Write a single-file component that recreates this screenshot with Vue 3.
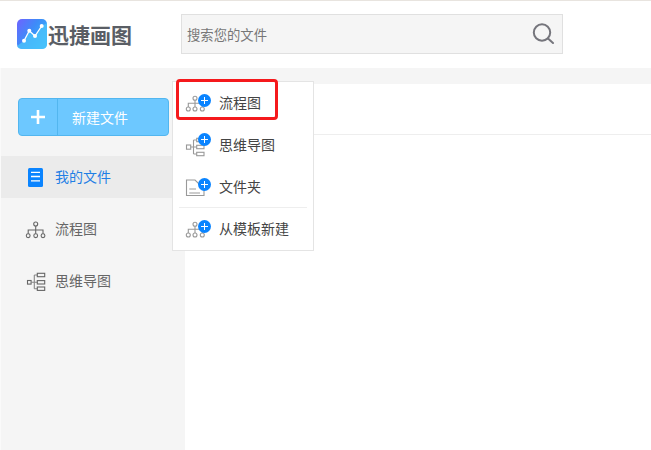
<template>
  <div class="page">
    <header class="topbar">
      <div class="logo">
        <svg class="logo-mark" width="30" height="30" viewBox="0 0 30 30">
          <defs>
            <linearGradient id="logoBg" x1="0" y1="0" x2="1" y2="0.7">
              <stop offset="0" stop-color="#6f62ff" />
              <stop offset="0.5" stop-color="#3d8cf8" />
              <stop offset="1" stop-color="#38b6fb" />
            </linearGradient>
          </defs>
          <rect width="30" height="30" rx="5" fill="url(#logoBg)" />
          <path d="M0 27 L7 21.7 L12.3 11.7 L18 17 L24.7 7 L30 4 V25 Q30 30 25 30 H5 Q1 30 0 27 Z" fill="#4cc4fb" opacity="0.75" />
          <path d="M7 21.7 L12.3 11.7 L18 17 L24.7 7" fill="none" stroke="#fff" stroke-width="1.3" />
          <circle cx="7" cy="21.7" r="2" fill="#fff" />
          <circle cx="12.3" cy="11.7" r="2" fill="#fff" />
          <circle cx="18" cy="17" r="2" fill="#fff" />
          <circle cx="24.7" cy="7" r="2" fill="#fff" />
        </svg>
        <span class="logo-text">迅捷画图</span>
      </div>
      <div class="search">
        <span class="search-hint">搜索您的文件</span>
        <svg width="24" height="24" viewBox="0 0 24 24" fill="none" stroke="#75757c" stroke-width="2">
          <circle cx="11" cy="10.5" r="8.2" />
          <path d="M17 16.5 L22 21" stroke-linecap="round" />
        </svg>
      </div>
    </header>

    <div class="body">
      <aside class="sidebar">
        <button class="new-btn">
          <span class="new-plus">
            <svg width="16" height="16" viewBox="0 0 16 16"><path d="M8 1V15M1 8H15" stroke="#fff" stroke-width="2.6" /></svg>
          </span>
          <span class="new-label">新建文件</span>
        </button>
        <nav class="nav">
          <a class="nav-item active">
            <svg width="20" height="20" viewBox="0 0 20 20">
              <rect x="2" y="1" width="15" height="19" rx="1.5" fill="#0a84ff" />
              <path d="M5 5.3H14M5 9.5H14M5 13.8H14" stroke="#fff" stroke-width="1.3" />
            </svg>
            <span class="label">我的文件</span>
          </a>
          <a class="nav-item">
            <svg width="20" height="18" viewBox="0 0 20 18" fill="none" stroke="#666" stroke-width="1.1">
              <circle cx="9.7" cy="4" r="2" />
              <path d="M9.7 6V13.7M2.2 13.7V10H17V13.7" />
              <circle cx="2.2" cy="15.7" r="1.9" />
              <circle cx="9.7" cy="15.7" r="1.9" />
              <circle cx="17" cy="15.7" r="1.9" />
            </svg>
            <span class="label">流程图</span>
          </a>
          <a class="nav-item">
            <svg width="20" height="18" viewBox="0 0 20 18" fill="none" stroke="#666" stroke-width="1.1">
              <rect x="1.5" y="8.5" width="3.6" height="3.6" />
              <path d="M5 10.3H8.3M8.3 3V16.7M8.3 3H11.3M8.3 10.3H11.3M8.3 16.7H11.3" stroke="#888" />
              <rect x="11.3" y="1.3" width="7.4" height="3.4" />
              <rect x="11.3" y="8.6" width="7.4" height="3.4" />
              <rect x="11.3" y="15" width="7.4" height="3.4" />
            </svg>
            <span class="label">思维导图</span>
          </a>
        </nav>
      </aside>
      <main class="main">
        <div class="main-head"></div>
      </main>
    </div>

    <div class="menu">
      <div class="menu-item">
        <span class="menu-icon">
          <svg width="26" height="22" viewBox="0 0 26 22" fill="none" stroke="#999" stroke-width="1.1">
            <circle cx="9" cy="7.3" r="2" />
            <path d="M9 9.3V16M2.3 16V12.3H16.3V16" />
            <circle cx="2.3" cy="18" r="2" />
            <circle cx="9" cy="18" r="2" />
            <circle cx="16.3" cy="18" r="2" />
          </svg>
          <i class="plus"></i>
        </span>
        <span class="label">流程图</span>
      </div>
      <div class="menu-item">
        <span class="menu-icon">
          <svg width="26" height="22" viewBox="0 0 26 22" fill="none" stroke="#999" stroke-width="1.1">
            <rect x="0.5" y="12" width="4.2" height="4.2" />
            <path d="M4.7 14H7.5M7.5 7V21M7.5 7H10.7M7.5 14H10.7M7.5 21H10.7" />
            <rect x="10.7" y="5.3" width="7.3" height="3.4" />
            <rect x="10.7" y="12.3" width="7.3" height="3.4" />
            <rect x="10.7" y="19.3" width="7.3" height="3.4" />
          </svg>
          <i class="plus high"></i>
        </span>
        <span class="label">思维导图</span>
      </div>
      <div class="menu-item">
        <span class="menu-icon">
          <svg width="26" height="22" viewBox="0 0 26 22" fill="none" stroke="#999" stroke-width="1.1">
            <path d="M0.5 20.5V5H9L13 9H18V20.5Z" />
            <path d="M3.3 14H10M3.3 18H14" />
          </svg>
          <i class="plus"></i>
        </span>
        <span class="label">文件夹</span>
      </div>
      <div class="menu-line"></div>
      <div class="menu-item">
        <span class="menu-icon">
          <svg width="26" height="22" viewBox="0 0 26 22" fill="none" stroke="#999" stroke-width="1.1">
            <circle cx="9" cy="7.3" r="2" />
            <path d="M9 9.3V16M2.3 16V12.3H16.3V16" />
            <circle cx="2.3" cy="18" r="2" />
            <circle cx="9" cy="18" r="2" />
            <circle cx="16.3" cy="18" r="2" />
          </svg>
          <i class="plus"></i>
        </span>
        <span class="label">从模板新建</span>
      </div>
      <div class="highlight"></div>
    </div>
  </div>
</template>

<script setup>
</script>

<style>
html,
body {
  margin: 0;
  background: #fff;
}
</style>

<style scoped>
.page {
  position: relative;
  width: 651px;
  height: 450px;
  overflow: hidden;
  display: flex;
  flex-direction: column;
  font-family: "Liberation Sans", "Noto Sans CJK SC", sans-serif;
  border-top: 1px solid #e8e4df;
  box-sizing: border-box;
}

.label {
  margin-bottom: 2px;
}

.topbar {
  height: 67px;
  flex: none;
  display: flex;
  align-items: center;
  padding: 0 0 0 17px;
  background: #fff;
  box-sizing: border-box;
}

.logo {
  display: flex;
  align-items: center;
  width: 164px;
  flex: none;
  margin-top: -1px;
}

.logo-mark {
  flex: none;
}

.logo-text {
  margin-left: 1px;
  font-size: 21px;
  font-weight: 700;
  color: #5a5e65;
  white-space: nowrap;
}

.search {
  width: 382px;
  height: 40px;
  box-sizing: border-box;
  display: flex;
  align-items: center;
  justify-content: space-between;
  padding: 0 7px 0 5px;
  background: #f5f5f5;
  border: 1px solid #e0e0e0;
  margin-top: -1px;
}

.search-hint {
  font-size: 13.33px;
  color: #777;
}

.body {
  flex: 1;
  display: flex;
  min-height: 0;
  background: #f5f5f5;
}

.sidebar {
  width: 185px;
  flex: none;
  background: #f5f5f5;
  border-left: 1px solid #fafafa;
  box-sizing: border-box;
}

.new-btn {
  display: flex;
  align-items: stretch;
  width: 151px;
  height: 38px;
  margin: 30px 0 0 17px;
  padding: 0;
  background: #6dc8ff;
  border: 1px solid #52b6ef;
  border-radius: 4px;
  color: #fff;
  font: inherit;
  font-size: 14px;
}

.new-plus {
  width: 38px;
  flex: none;
  display: flex;
  align-items: center;
  justify-content: center;
  border-right: 1px solid #52b6ef;
}

.new-label {
  display: flex;
  align-items: center;
  padding-left: 14px;
}

.nav {
  margin-top: 20px;
  display: flex;
  flex-direction: column;
  gap: 10px;
}

.nav-item {
  height: 42px;
  display: flex;
  align-items: center;
  padding-left: 25px;
  gap: 9px;
  font-size: 14px;
  color: #666;
}

.nav-item svg {
  flex: none;
  width: 20px;
  overflow: visible;
}

.nav-item.active {
  background: #ebebeb;
  color: #1f7fe5;
}

.main {
  flex: 1;
  margin-top: 16px;
  background: #fff;
}

.main-head {
  height: 50px;
  border-bottom: 1px solid #eee;
}

.menu {
  position: absolute;
  left: 172px;
  top: 80px;
  width: 142px;
  height: 170px;
  box-sizing: border-box;
  background: #fff;
  border: 1px solid #e4e4e4;
}

.menu-item {
  height: 42px;
  display: flex;
  align-items: center;
  padding-left: 13px;
  gap: 7px;
  font-size: 14px;
  color: #444;
}

.menu-line {
  height: 1px;
  margin: -1px 6px 0;
  background: #eee;
}

.menu-icon {
  position: relative;
  width: 26px;
  height: 22px;
  margin-bottom: 2px;
  flex: none;
  display: block;
}

.menu-icon svg {
  display: block;
  overflow: visible;
}

.plus {
  position: absolute;
  left: 12px;
  top: 3px;
  width: 13px;
  height: 13px;
  border-radius: 50%;
  background: #0a84ff linear-gradient(#fff, #fff) center / 7px 1.4px no-repeat;
}

.plus.high {
  top: 0;
}

.plus::after {
  content: "";
  position: absolute;
  left: 5.8px;
  top: 3px;
  width: 1.4px;
  height: 7px;
  background: #fff;
}

.highlight {
  position: absolute;
  left: 3px;
  top: -3px;
  width: 102px;
  height: 41px;
  box-sizing: border-box;
  border: 3px solid #f5191c;
  border-radius: 4px;
}
</style>
